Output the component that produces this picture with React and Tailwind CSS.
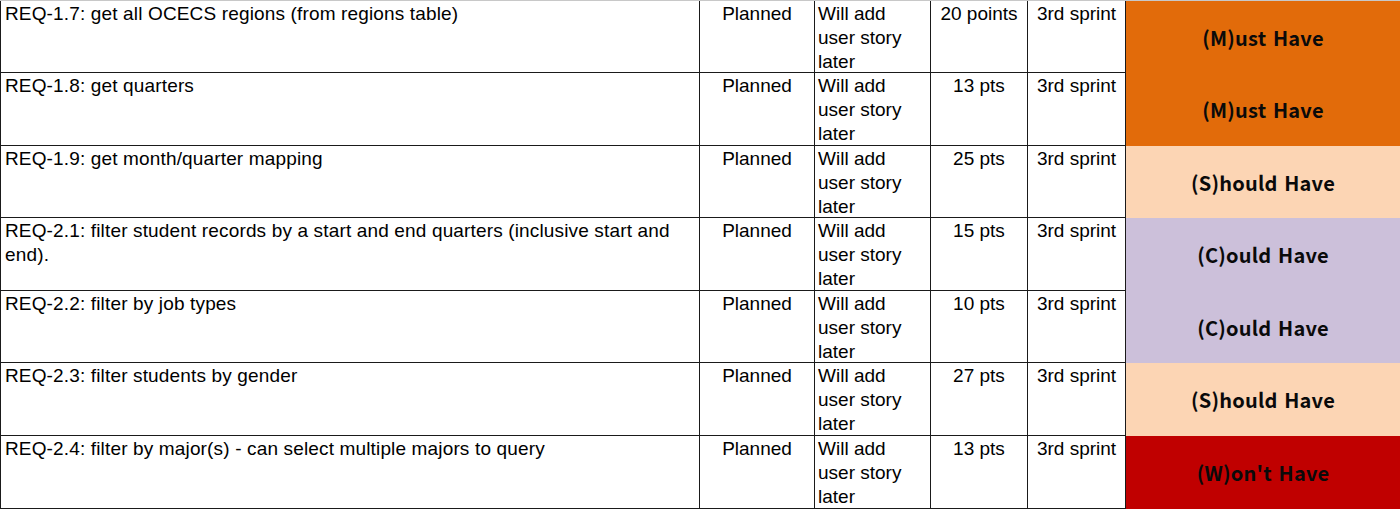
import React from "react";

const rows = [
  { req: "REQ-1.7: get all OCECS regions (from regions table)", pts: "20 points", pri: "(M)ust Have", bg: "bg-[#e26b0a]", h: "h-[72px]" },
  { req: "REQ-1.8: get quarters", pts: "13 pts", pri: "(M)ust Have", bg: "bg-[#e26b0a]", h: "h-[73px]" },
  { req: "REQ-1.9: get month/quarter mapping", pts: "25 pts", pri: "(S)hould Have", bg: "bg-[#fcd5b4]", h: "h-[72px]" },
  { req: ["REQ-2.1: filter student records by a start and end quarters (inclusive start and", "end)."], pts: "15 pts", pri: "(C)ould Have", bg: "bg-[#ccc0da]", h: "h-[73px]" },
  { req: "REQ-2.2: filter by job types", pts: "10 pts", pri: "(C)ould Have", bg: "bg-[#ccc0da]", h: "h-[72px]" },
  { req: "REQ-2.3: filter students by gender", pts: "27 pts", pri: "(S)hould Have", bg: "bg-[#fcd5b4]", h: "h-[73px]" },
  { req: "REQ-2.4: filter by major(s) - can select multiple majors to query", pts: "13 pts", pri: "(W)on't Have", bg: "bg-[#c00000]", h: "h-[73px]" },
];

const sans = { fontFamily: '"Liberation Sans", Arial, sans-serif' };
const bold = { fontFamily: '"Noto Sans CJK KR", "Open Sans", sans-serif' };

export default function App() {
  return (
    <div className="w-[1400px] h-[509px] bg-white overflow-hidden">
      <div className="border-t border-[#c8c8c8]">
        {rows.map((r, i) => (
          <div key={i} className={`flex ${r.h} text-[19px] leading-[24px] text-black`} style={sans}>
            <div className="w-[700px] shrink-0 border-l border-r border-b border-[#1a1a1a] pl-[4px] pt-px tracking-[0.15px]">
              {Array.isArray(r.req) ? (
                <>
                  {r.req[0]}
                  <br />
                  {r.req[1]}
                </>
              ) : (
                r.req
              )}
            </div>
            <div className="w-[115px] shrink-0 border-r border-b border-[#1a1a1a] pt-px text-center">Planned</div>
            <div className="w-[116px] shrink-0 border-r border-b border-[#1a1a1a] pt-px pl-[3px]">
              Will add
              <br />
              user story
              <br />
              later
            </div>
            <div className="w-[97px] shrink-0 border-r border-b border-[#1a1a1a] pt-px text-center">{r.pts}</div>
            <div className="w-[98px] shrink-0 border-r border-b border-[#1a1a1a] pt-px text-center">3rd sprint</div>
            <div className={`flex-1 ${r.bg} flex items-center justify-center pt-px`}>
              <span className="font-bold text-[20px] tracking-[0.2px] text-[#0a0a0a] [word-spacing:2px]" style={bold}>{r.pri}</span>
            </div>
          </div>
        ))}
      </div>
    </div>
  );
}
